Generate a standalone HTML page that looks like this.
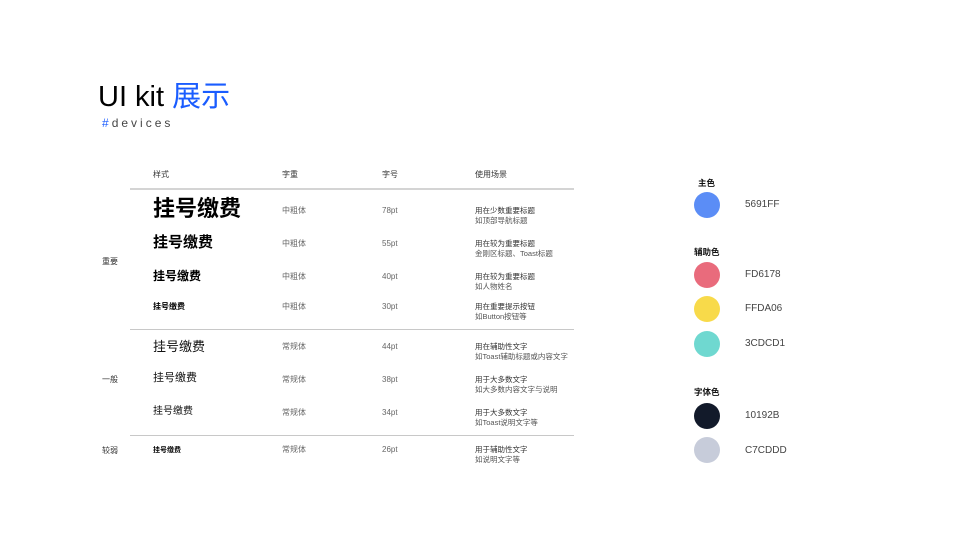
<!DOCTYPE html>
<html><head><meta charset="utf-8"><style>
body{margin:0;width:960px;height:540px;background:#fff;position:relative;overflow:hidden;font-family:"Liberation Sans","Noto Sans CJK SC",sans-serif;color:#111}
.a{position:absolute;white-space:nowrap;line-height:1}
.h{font-size:8px;color:#333}
.g{font-size:8px;color:#666}
.u{font-size:7.5px;color:#333;line-height:10px}
.u span{color:#555}
.s{font-weight:bold;color:#000}
.ln{position:absolute;left:130px;width:444px;height:1px;background:#c8c8c8}
.c{position:absolute;left:694px;width:26px;height:26px;border-radius:50%}
.hx{font-size:10px;color:#444;left:745px}
.lb{font-size:8.5px;font-weight:bold;color:#111}
</style></head><body>
<div class="a" style="left:98px;top:83px;font-size:29px;color:#000">UI kit <span style="color:#1a5cff">展示</span></div>
<div class="a" style="left:102px;top:117px;font-size:12px;letter-spacing:3px;color:#444"><span style="color:#1a5cff">#</span>devices</div>

<div class="a h" style="left:153px;top:171px">样式</div>
<div class="a h" style="left:282px;top:171px">字重</div>
<div class="a h" style="left:382px;top:171px">字号</div>
<div class="a h" style="left:475px;top:171px">使用场景</div>
<div class="ln" style="top:188px;height:2px;background:#d4d4d4"></div>

<div class="a s" style="left:153px;top:198px;font-size:22px">挂号缴费</div>
<div class="a g" style="left:282px;top:207px">中粗体</div>
<div class="a g" style="left:382px;top:207px">78pt</div>
<div class="a u" style="left:475px;top:206px">用在少数重要标题<br><span>如顶部导航标题</span></div>

<div class="a s" style="left:153px;top:235px;font-size:15px">挂号缴费</div>
<div class="a g" style="left:282px;top:240px">中粗体</div>
<div class="a g" style="left:382px;top:240px">55pt</div>
<div class="a u" style="left:475px;top:239px">用在较为重要标题<br><span>金刚区标题、Toast标题</span></div>

<div class="a h" style="left:102px;top:258px">重要</div>

<div class="a s" style="left:153px;top:270px;font-size:12px">挂号缴费</div>
<div class="a g" style="left:282px;top:273px">中粗体</div>
<div class="a g" style="left:382px;top:273px">40pt</div>
<div class="a u" style="left:475px;top:272px">用在较为重要标题<br><span>如人物姓名</span></div>

<div class="a s" style="left:153px;top:303px;font-size:8px">挂号缴费</div>
<div class="a g" style="left:282px;top:303px">中粗体</div>
<div class="a g" style="left:382px;top:303px">30pt</div>
<div class="a u" style="left:475px;top:302px">用在重要提示按钮<br><span>如Button按钮等</span></div>
<div class="ln" style="top:329px"></div>

<div class="a" style="left:153px;top:340px;font-size:13px">挂号缴费</div>
<div class="a g" style="left:282px;top:343px">常规体</div>
<div class="a g" style="left:382px;top:343px">44pt</div>
<div class="a u" style="left:475px;top:342px">用在辅助性文字<br><span>如Toast辅助标题或内容文字</span></div>

<div class="a h" style="left:102px;top:376px">一般</div>
<div class="a" style="left:153px;top:373px;font-size:11px">挂号缴费</div>
<div class="a g" style="left:282px;top:376px">常规体</div>
<div class="a g" style="left:382px;top:376px">38pt</div>
<div class="a u" style="left:475px;top:375px">用于大多数文字<br><span>如大多数内容文字与说明</span></div>

<div class="a" style="left:153px;top:407px;font-size:10px">挂号缴费</div>
<div class="a g" style="left:282px;top:409px">常规体</div>
<div class="a g" style="left:382px;top:409px">34pt</div>
<div class="a u" style="left:475px;top:408px">用于大多数文字<br><span>如Toast说明文字等</span></div>
<div class="ln" style="top:435px"></div>

<div class="a h" style="left:102px;top:447px">较弱</div>
<div class="a s" style="left:153px;top:447px;font-size:7px">挂号缴费</div>
<div class="a g" style="left:282px;top:446px">常规体</div>
<div class="a g" style="left:382px;top:446px">26pt</div>
<div class="a u" style="left:475px;top:445px">用于辅助性文字<br><span>如说明文字等</span></div>

<div class="a lb" style="left:698px;top:179px">主色</div>
<div class="c" style="top:192px;background:#5b8df6"></div>
<div class="a hx" style="top:200px">5691FF</div>

<div class="a lb" style="left:694px;top:248px">辅助色</div>
<div class="c" style="top:262px;background:#e96b7c"></div>
<div class="a hx" style="top:270px">FD6178</div>
<div class="c" style="top:296px;background:#f8da4a"></div>
<div class="a hx" style="top:304px">FFDA06</div>
<div class="c" style="top:331px;background:#6fd8d0"></div>
<div class="a hx" style="top:339px">3CDCD1</div>

<div class="a lb" style="left:694px;top:388px">字体色</div>
<div class="c" style="top:403px;background:#121a2a"></div>
<div class="a hx" style="top:411px">10192B</div>
<div class="c" style="top:437px;background:#c7ccda"></div>
<div class="a hx" style="top:446px">C7CDDD</div>
</body></html>
